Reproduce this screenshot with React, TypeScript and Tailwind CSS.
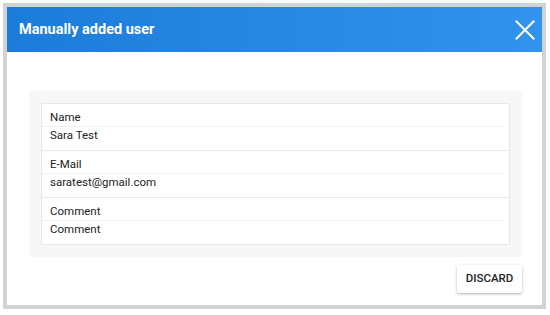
function Field({ label, value }: { label: string; value: string }) {
  return (
    <div className="pt-[6px] pb-[5px] border-b border-[#e8e8e8] last:border-b-0">
      <div className="mr-[6px] h-[17px] pl-2 flex items-center border-b border-[#f1f1f1] text-[11.5px] text-[#222]">
        {label}
      </div>
      <div className="h-[18px] pl-2 flex items-center text-[11.5px] text-[#222]">{value}</div>
    </div>
  );
}

export default function App() {
  return (
    <div className="w-[550px] h-[315px] bg-white pt-[3px] pl-[3px] font-['Roboto',sans-serif]">
      <div className="w-[543px] h-[306px] border-4 border-[#d2d2d2] bg-white flex flex-col">
        {/* Header */}
        <header className="h-[45px] pl-3 pr-[7px] flex items-center justify-between bg-gradient-to-r from-[#1c7cda] to-[#3193ec]">
          <h1 className="text-[14.5px] font-bold text-white">Manually added user</h1>
          <button aria-label="Close" className="text-white">
            <svg width="20" height="20" viewBox="0 0 20 20" fill="none" stroke="currentColor" strokeWidth="2" strokeLinecap="square">
              <path d="M1.5 1.5 18.5 18.5M18.5 1.5 1.5 18.5" />
            </svg>
          </button>
        </header>

        <main className="pl-[22px] pr-[20px] pt-[39px] flex flex-col">
          <div className="bg-[#f7f7f7] p-3">
            <div className="bg-white border border-[#e8e8e8]">
              <Field label="Name" value="Sara Test" />
              <Field label="E-Mail" value="saratest@gmail.com" />
              <Field label="Comment" value="Comment" />
            </div>
          </div>

          <div className="flex justify-end pt-2">
            <button className="w-[65px] h-[28px] bg-white rounded-[2px] shadow-[0_1px_3px_rgba(0,0,0,0.3)] text-[11.5px] font-medium text-[#222]">
              DISCARD
            </button>
          </div>
        </main>
      </div>
    </div>
  );
}
